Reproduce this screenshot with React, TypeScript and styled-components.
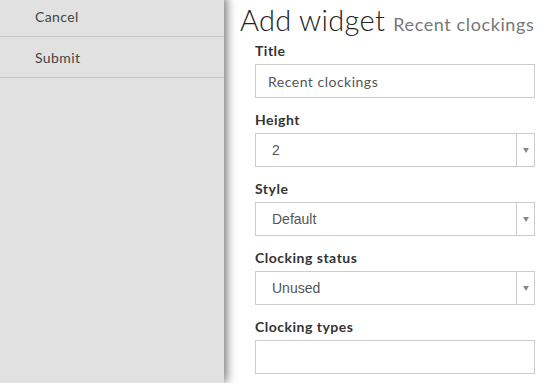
import React from "react";
import styled, { createGlobalStyle } from "styled-components";

const Global = createGlobalStyle`
  html, body { margin: 0; padding: 0; background: #fff; }
  body { font-family: Lato, "Open Sans", sans-serif; color: #333; overflow: hidden; }
  * { box-sizing: border-box; }
`;

const Page = styled.div`
  display: flex;
  height: 383px;
  width: 549px;
  overflow: hidden;
`;

const Sidebar = styled.nav`
  width: 224px;
  flex: none;
  background: #e1e1e1;
  box-shadow: 2px 0 10px rgba(0, 0, 0, 0.6);
  position: relative;
  z-index: 1;
  display: flex;
  flex-direction: column;
  margin-top: -4px;
`;

const NavItem = styled.div`
  height: 41px;
  padding-left: 35px;
  display: flex;
  align-items: center;
  border-bottom: 1px solid #c8c8c8;
  font-size: 14px;
  letter-spacing: 0.4px;
  color: #444;
`;

const Main = styled.main`
  flex: 1;
  padding: 4px 0 0 16px;
`;

const Heading = styled.h1`
  margin: 0;
  font-size: 29px;
  font-weight: 300;
  color: #222;
  line-height: 32px;
  white-space: nowrap;
  letter-spacing: 0.3px;
`;

const Sub = styled.small`
  font-size: 18px;
  color: #777;
  font-weight: 400;
  letter-spacing: 0.6px;
`;

const Form = styled.div`
  margin-left: 15px;
  width: 280px;
  display: flex;
  flex-direction: column;
  margin-top: 1px;
`;

const Group = styled.div`
  display: flex;
  flex-direction: column;
  margin-bottom: 6px;
`;

const Label = styled.label`
  font-size: 14px;
  font-weight: 700;
  color: #333;
  height: 20px;
  line-height: 20px;
  margin-bottom: 3px;
  letter-spacing: 0.5px;
`;

const Input = styled.div`
  height: 34px;
  border: 1px solid #ccc;
  padding-left: 12px;
  display: flex;
  align-items: center;
  font-size: 14px;
  letter-spacing: 0.5px;
  color: #555;
  margin-bottom: 6px;
`;

const Select = styled.div`
  height: 34px;
  border: 1px solid #ccc;
  display: flex;
  align-items: stretch;
  margin-bottom: 6px;
`;

const SelectValue = styled.div`
  flex: 1;
  display: flex;
  align-items: center;
  padding-left: 16px;
  font-family: "Liberation Sans", Arial, sans-serif;
  font-size: 14px;
  color: #555;
`;

const Arrow = styled.div`
  width: 18px;
  border-left: 1px solid #ccc;
  display: flex;
  align-items: center;
  justify-content: center;
  &::after {
    content: "";
    border-left: 3px solid transparent;
    border-right: 3px solid transparent;
    border-top: 5px solid #888;
  }
`;

export default function App() {
  return (
    <>
      <Global />
      <Page>
        <Sidebar>
          <NavItem>Cancel</NavItem>
          <NavItem>Submit</NavItem>
        </Sidebar>
        <Main>
          <Heading>
            Add widget <Sub>Recent clockings</Sub>
          </Heading>
          <Form>
            <Group>
              <Label>Title</Label>
              <Input>Recent clockings</Input>
            </Group>
            <Group>
              <Label>Height</Label>
              <Select>
                <SelectValue>2</SelectValue>
                <Arrow />
              </Select>
            </Group>
            <Group>
              <Label>Style</Label>
              <Select>
                <SelectValue>Default</SelectValue>
                <Arrow />
              </Select>
            </Group>
            <Group>
              <Label>Clocking status</Label>
              <Select>
                <SelectValue>Unused</SelectValue>
                <Arrow />
              </Select>
            </Group>
            <Group>
              <Label>Clocking types</Label>
              <Input />
            </Group>
          </Form>
        </Main>
      </Page>
    </>
  );
}
